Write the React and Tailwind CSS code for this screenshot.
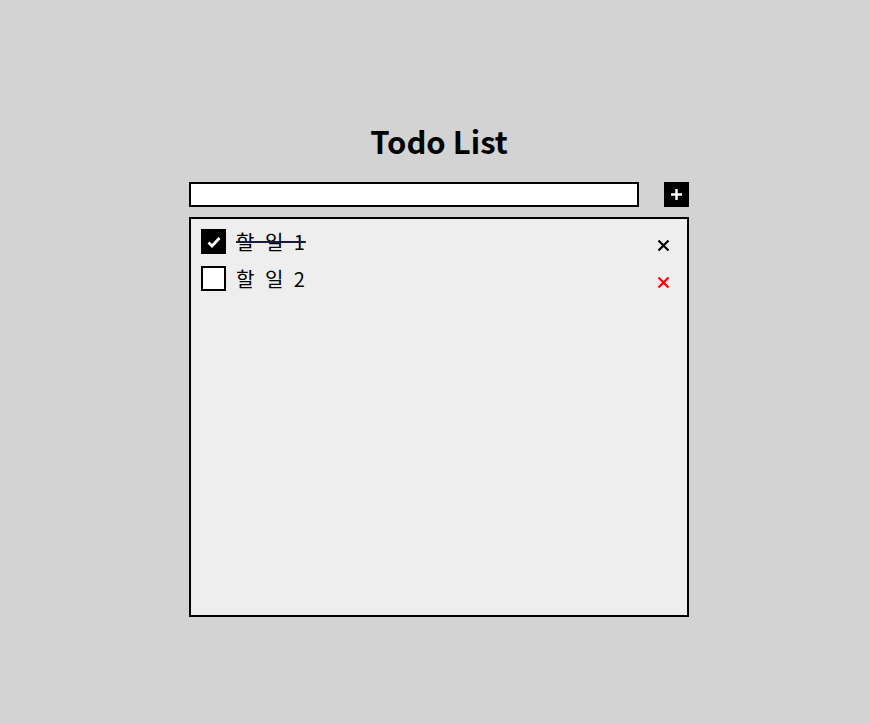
import React, { useState } from 'react';

const font = { fontFamily: '"Noto Sans CJK KR", "Noto Sans", sans-serif' };

const CheckIcon = () => (
  <svg width="16" height="16" viewBox="0 0 16 16">
    <path d="M2.5 8.5 L6 12 L13.5 4" stroke="white" strokeWidth="2.8" fill="none" />
  </svg>
);

const XIcon = ({ color }) => (
  <svg width="13" height="13" viewBox="0 0 13 13">
    <path d="M1.5 1.5 L11.5 11.5 M11.5 1.5 L1.5 11.5" stroke={color} strokeWidth="2.2" fill="none" />
  </svg>
);

const App = () => {
  const [todos, setTodos] = useState([
    { id: 1, text: '할 일 1', done: true },
    { id: 2, text: '할 일 2', done: false },
  ]);

  const toggle = (id) =>
    setTodos(todos.map((t) => (t.id === id ? { ...t, done: !t.done } : t)));

  return (
    <div className="min-h-[724px] w-full bg-[#d3d3d3] flex justify-center pl-[8px] pt-[119px]" style={font}>
      <div className="w-[500px] flex flex-col items-center">
        {/* 제목 */}
        <h1 className="text-[31px] leading-[44px] font-bold text-black">Todo List</h1>

        {/* 입력 */}
        <div className="mt-[19px] w-full flex items-center justify-between">
          <input className="w-[450px] h-[25px] border-2 border-black bg-white outline-none px-1" />
          <button className="w-[25px] h-[25px] bg-black flex items-center justify-center">
            <svg width="13" height="13" viewBox="0 0 13 13">
              <path d="M6.5 1 V12 M1 6.5 H12" stroke="white" strokeWidth="2.4" />
            </svg>
          </button>
        </div>

        {/* 목록 */}
        <div className="mt-[10px] w-full h-[400px] border-2 border-black bg-[#eeeeee] pt-[10px] pl-[10px] pr-[17px] flex flex-col gap-[12px]">
          {todos.map((t) => (
            <div key={t.id} className="flex items-center h-[25px]">
              <button
                onClick={() => toggle(t.id)}
                className={`w-[25px] h-[25px] border-2 border-black flex items-center justify-center ${t.done ? 'bg-black' : 'bg-white'}`}
              >
                {t.done && <CheckIcon />}
              </button>
              <span
                className={`ml-[10px] text-[20px] leading-[25px] tracking-[1px] text-black ${t.done ? 'line-through decoration-[#1a1a40]' : ''}`}
                style={{ wordSpacing: '4px' }}
              >
                {t.text}
              </span>
              <button className="ml-auto mt-[8px] flex items-center justify-center">
                <XIcon color={t.done ? '#000000' : '#ff0000'} />
              </button>
            </div>
          ))}
        </div>
      </div>
    </div>
  );
};

export default App;
